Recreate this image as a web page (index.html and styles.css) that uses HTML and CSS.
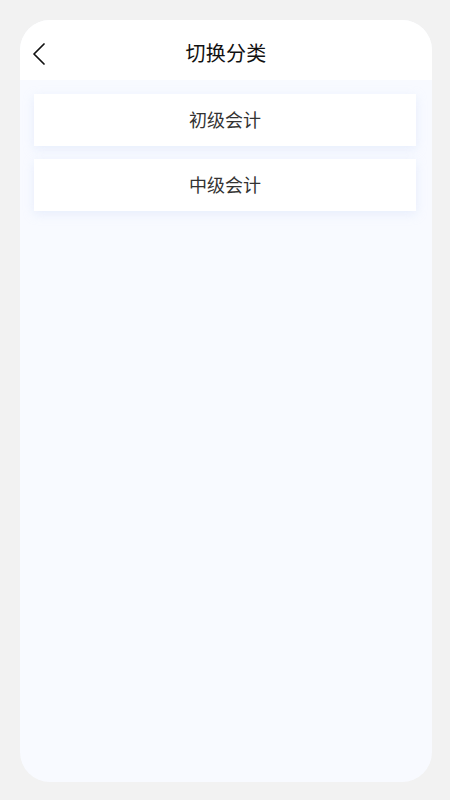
FILE: index.html
```html
<!DOCTYPE html>
<html lang="zh">
<head>
<meta charset="utf-8">
<link rel="stylesheet" href="styles.css">
</head>
<body>
<div class="phone">
  <header class="nav">
    <span class="back">
      <svg width="14" height="22" viewBox="0 0 14 22"><path d="M12 1 L2 11 L12 21" fill="none" stroke="#111" stroke-width="1.7" stroke-linecap="round" stroke-linejoin="round"/></svg>
    </span>
    <h1 class="title">切换分类</h1>
  </header>
  <main class="content">
    <div class="card">初级会计</div>
    <div class="card">中级会计</div>
  </main>
</div>
</body>
</html>
```
FILE: styles.css
```css
html, body { margin: 0; padding: 0; }
body {
  background: #f2f2f2;
  width: 450px;
  height: 800px;
  font-family: "Noto Sans CJK SC", "Noto Sans", sans-serif;
  box-sizing: border-box;
  padding: 20px 18px 18px 20px;
}
.phone {
  width: 412px;
  height: 762px;
  border-radius: 30px;
  overflow: hidden;
  background: #f8faff;
  display: flex;
  flex-direction: column;
}
.nav {
  height: 60px;
  box-sizing: border-box;
  padding-top: 5px;
  background: #fff;
  position: relative;
  display: flex;
  align-items: center;
  justify-content: center;
  flex-shrink: 0;
}
.back {
  position: absolute;
  left: 12px;
  top: 23px;
  display: flex;
}
.title {
  margin: 0;
  font-size: 20px;
  line-height: 24px;
  font-weight: 400;
  color: #111;
  letter-spacing: 0.3px;
}
.content {
  padding: 14px 16px 0 14px;
  display: flex;
  flex-direction: column;
  gap: 13px;
}
.card {
  height: 52px;
  box-sizing: border-box;
  padding-bottom: 3px;
  background: #fff;
  box-shadow: 0 3px 10px rgba(200, 215, 245, 0.35);
  display: flex;
  align-items: center;
  justify-content: center;
  font-size: 18px;
  line-height: 22px;
  color: #333;
  letter-spacing: 0;
}
```
